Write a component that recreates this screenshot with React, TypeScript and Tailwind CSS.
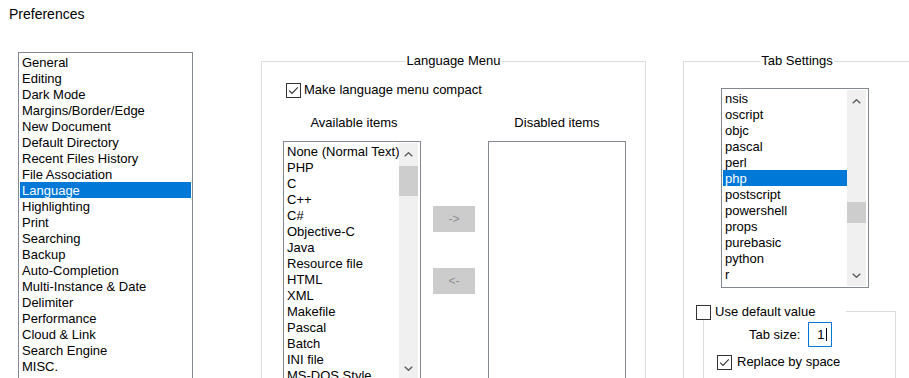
import React from "react";

const categories = [
  "General",
  "Editing",
  "Dark Mode",
  "Margins/Border/Edge",
  "New Document",
  "Default Directory",
  "Recent Files History",
  "File Association",
  "Language",
  "Highlighting",
  "Print",
  "Searching",
  "Backup",
  "Auto-Completion",
  "Multi-Instance & Date",
  "Delimiter",
  "Performance",
  "Cloud & Link",
  "Search Engine",
  "MISC.",
];

const available = [
  "None (Normal Text)",
  "PHP",
  "C",
  "C++",
  "C#",
  "Objective-C",
  "Java",
  "Resource file",
  "HTML",
  "XML",
  "Makefile",
  "Pascal",
  "Batch",
  "INI file",
  "MS-DOS Style",
  "ASP",
];

const tabLangs = [
  "nsis",
  "oscript",
  "objc",
  "pascal",
  "perl",
  "php",
  "postscript",
  "powershell",
  "props",
  "purebasic",
  "python",
  "r",
  "raku",
];

function Chevron({ down }: { down?: boolean }) {
  return (
    <svg width="9" height="5" viewBox="0 0 9 5" className="block">
      <polyline
        points={down ? "0.7,0.7 4.5,4.3 8.3,0.7" : "0.7,4.3 4.5,0.7 8.3,4.3"}
        fill="none"
        stroke="#606060"
        strokeWidth="1.4"
      />
    </svg>
  );
}

function Scrollbar({ thumbTop, thumbH }: { thumbTop: number; thumbH: number }) {
  return (
    <div className="mr-[1px] flex w-[19px] shrink-0 flex-col bg-[#f0f0f0]">
      <div className="flex h-[22px] items-center justify-center">
        <Chevron />
      </div>
      <div className="flex-1">
        <div className="w-full bg-[#cdcdcd]" style={{ marginTop: thumbTop, height: thumbH }} />
      </div>
      <div className="flex h-[22px] items-center justify-center">
        <Chevron down />
      </div>
    </div>
  );
}

function ListBox({
  items,
  selected,
  className,
  scroll,
}: {
  items: string[];
  selected?: string;
  className: string;
  scroll?: { top: number; h: number };
}) {
  return (
    <div className={"flex shrink-0 border border-[#828790] bg-white p-[1px] " + className}>
      <div className="min-w-0 flex-1 overflow-hidden">
        {items.map((it) => (
          <div
            key={it}
            className={
              "h-[16px] overflow-hidden whitespace-nowrap pl-[2px] leading-[18px] " +
              (it === selected ? "bg-[#0078d7] text-white" : "text-black")
            }
          >
            {it}
          </div>
        ))}
      </div>
      {scroll && <Scrollbar thumbTop={scroll.top} thumbH={scroll.h} />}
    </div>
  );
}

function CheckBox({ checked }: { checked?: boolean }) {
  return (
    <div className="flex h-[15px] w-[15px] shrink-0 items-center justify-center border border-[#333333] bg-white">
      {checked && (
        <svg width="13" height="13" viewBox="0 0 13 13" className="block">
          <polyline points="2.2,6.6 5,9.4 10.8,3.4" fill="none" stroke="#333333" strokeWidth="1.1" />
        </svg>
      )}
    </div>
  );
}

function GroupTitle({ children }: { children: React.ReactNode }) {
  return (
    <div className="absolute -top-[9px] left-1/2 -translate-x-1/2 whitespace-nowrap bg-white px-[1px] leading-[16px]">
      {children}
    </div>
  );
}

function ArrowButton({ label }: { label: string }) {
  return (
    <div className="flex h-[26px] w-[42px] items-center justify-center border border-[#cccccc] bg-[#cccccc] text-[12px] text-[#8f8f8f]">
      {label}
    </div>
  );
}

export default function App() {
  return (
    <div className="h-[378px] w-[909px] overflow-hidden bg-white font-['Liberation_Sans',Arial,sans-serif] text-[13px] leading-[16px] text-black">
      <div className="h-[52px] pl-[9px] pt-[4px] text-[14px] leading-[20px]">Preferences</div>

      <div className="flex items-start">
        <ListBox items={categories} selected="Language" className="ml-[18px] h-[330px] w-[175px]" />

        {/* Language Menu */}
        <div className="relative ml-[68px] mt-[9px] h-[330px] w-[385px] shrink-0 border border-[#dcdcdc]">
          <GroupTitle>Language Menu</GroupTitle>
          <div className="flex items-center pl-[24px] pt-[20px]">
            <CheckBox checked />
            <span className="ml-[3px]">Make language menu compact</span>
          </div>

          <div className="mt-[17px] flex items-start pl-[21px]">
            <div className="flex w-[138px] flex-col items-center">
              <div className="pl-[4px]">Available items</div>
              <ListBox items={available} className="mt-[10px] h-[240px] w-[138px]" scroll={{ top: 1, h: 30 }} />
            </div>
            <div className="ml-[12px] flex flex-col pt-[91px]">
              <ArrowButton label="->" />
              <div className="mt-[36px]">
                <ArrowButton label="<-" />
              </div>
            </div>
            <div className="ml-[13px] flex w-[138px] flex-col items-center">
              <div>Disabled items</div>
              <div className="mt-[10px] h-[240px] w-[138px] border border-[#828790] bg-white" />
            </div>
          </div>
        </div>

        {/* Tab Settings */}
        <div className="relative ml-[37px] mt-[9px] h-[330px] w-[228px] shrink-0 border border-[#dcdcdc]">
          <GroupTitle>Tab Settings</GroupTitle>
          <ListBox
            items={tabLangs}
            selected="php"
            className="ml-[37px] mt-[26px] h-[200px] w-[148px]"
            scroll={{ top: 90, h: 21 }}
          />

          <div className="relative ml-[19px] mt-[23px] h-[80px] w-[193px] border border-[#dcdcdc]">
            <div className="absolute -left-[8px] -top-[8px] flex w-[150px] items-center bg-white">
              <CheckBox />
              <span className="ml-[4px]">Use default value</span>
            </div>
            <div className="flex items-center pl-[45px] pt-[10px]">
              <span>Tab size:</span>
              <div className="ml-[8px] flex h-[25px] w-[24px] items-center border border-[#0078d7] pl-[8px]">
                <span>1</span>
                <span className="ml-[1px] h-[13px] w-[1px] bg-black" />
              </div>
            </div>
            <div className="mt-[7px] flex items-center pl-[13px]">
              <CheckBox checked />
              <span className="ml-[5px]">Replace by space</span>
            </div>
          </div>
        </div>
      </div>
    </div>
  );
}
